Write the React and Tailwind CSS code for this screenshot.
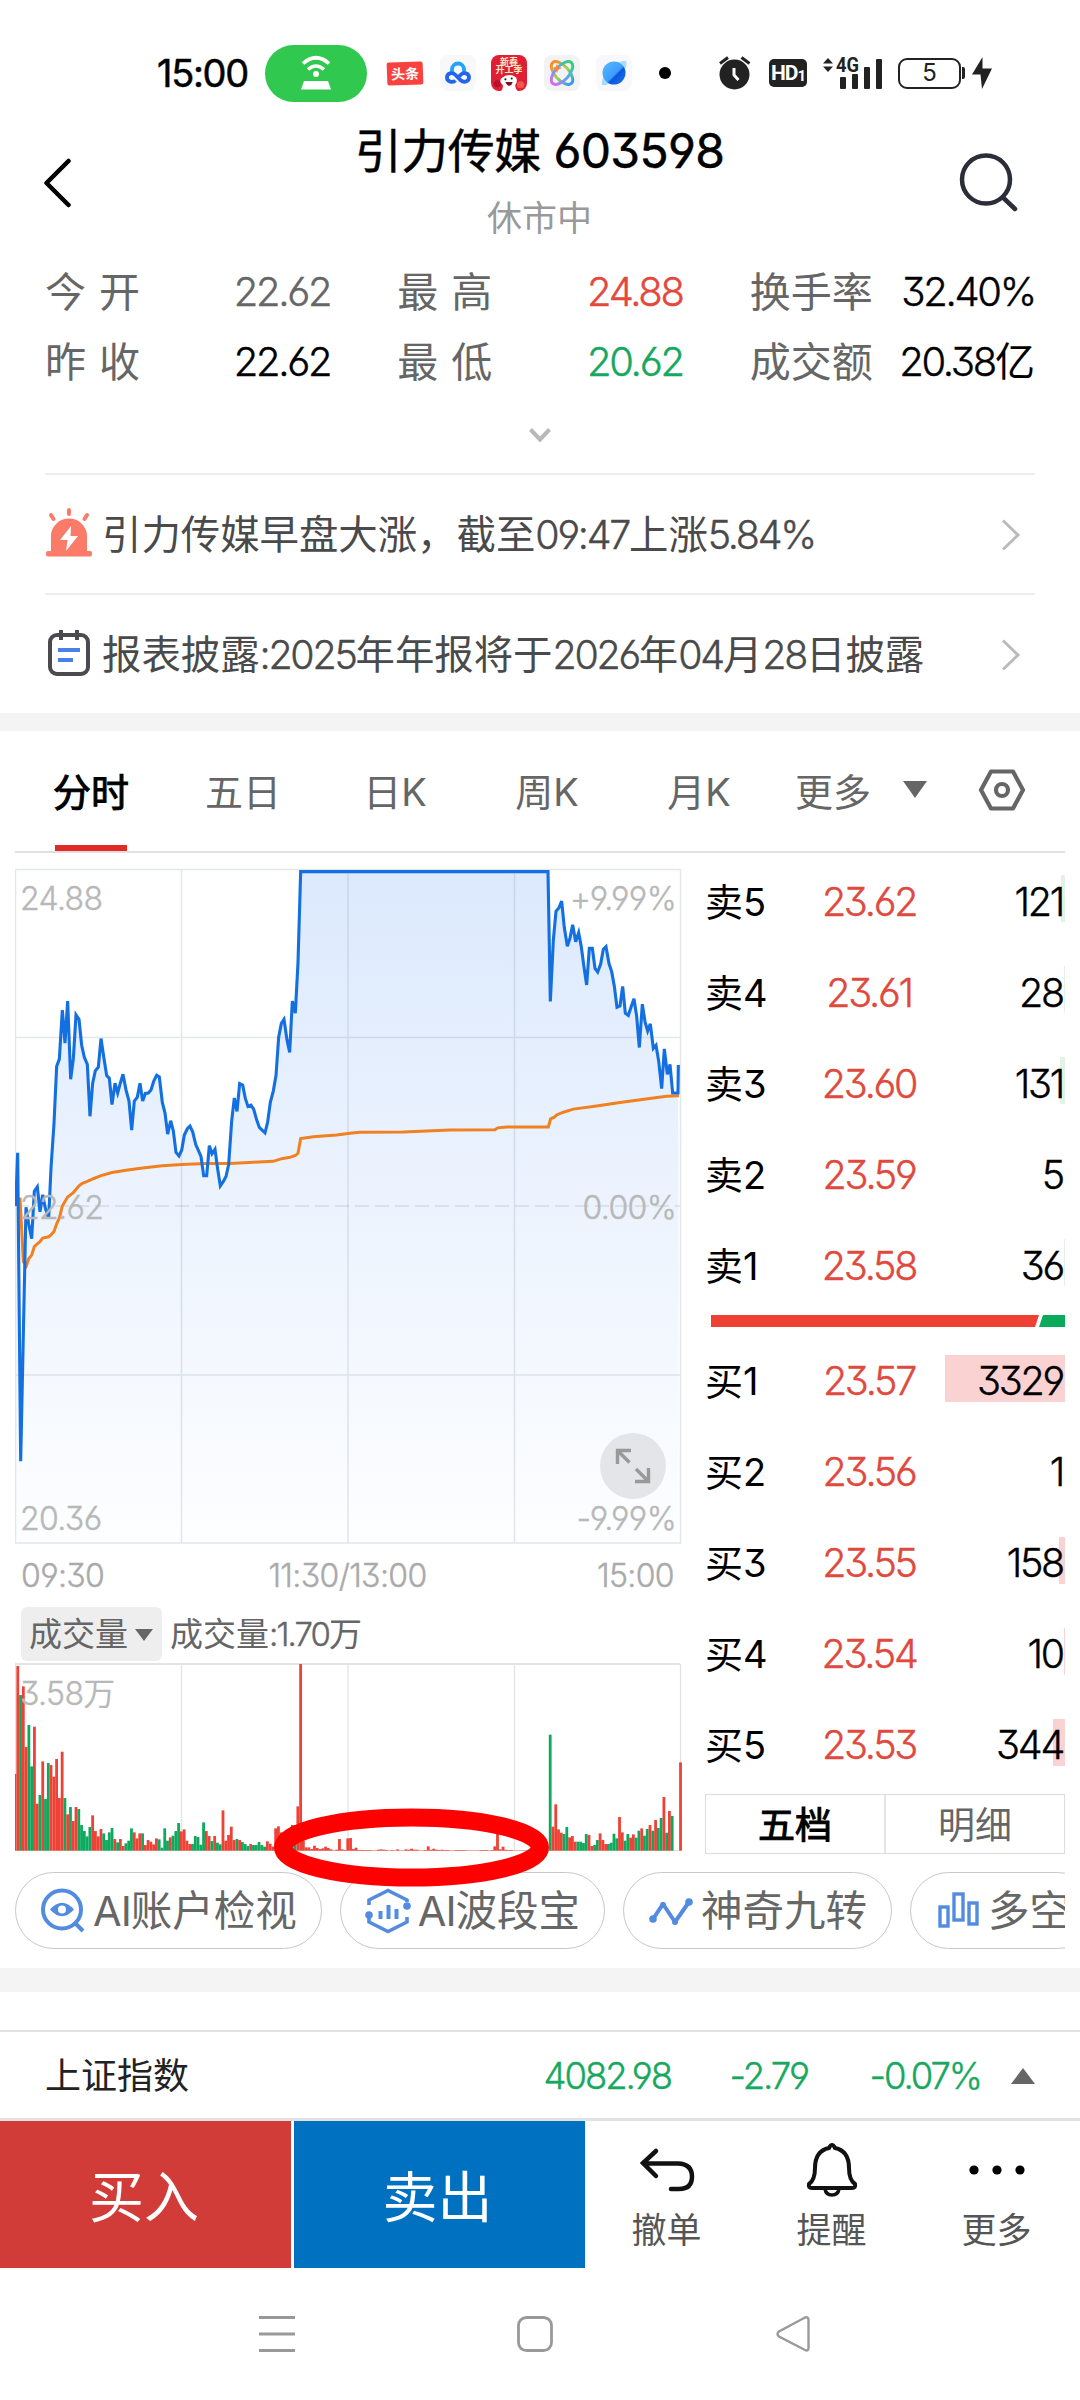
import React from 'react'

const PRICE_LINE =
    '47,775 53,656 62,1347 78,778 86,815 95,848 103,742 112,732 120,788 128,750 136,780 146,803 153,690 162,590 170,462 178,446 187,336 195,410 203,316 212,491 220,445 228,347 237,357 245,415 253,442 262,458 270,574 278,500 286,472 295,464 303,400 311,440 320,483 328,489 336,548 345,500 353,522 361,500 369,480 378,515 387,540 395,605 403,540 412,531 420,500 428,540 436,523 445,522 453,515 461,496 470,482 478,486 487,543 495,567 503,614 512,584 520,607 528,655 537,663 545,650 553,616 562,602 570,596 578,609 587,637 603,664 611,707 620,707 628,640 636,658 645,648 653,692 661,730 670,720 678,709 686,682 695,585 703,533 711,563 719,501 728,504 736,534 744,552 753,549 761,558 770,582 778,599 795,611 803,587 811,543 820,517 828,483 836,397 844,366 852,357 861,403 869,431 877,316 886,343 894,230 902,26 ' +
    '1644,26 1651,317 1660,180 1668,115 1677,107 1685,92 1693,152 1702,193 1710,175 1718,145 1727,183 1736,163 1744,195 1752,240 1760,280 1768,198 1777,198 1785,243 1793,251 1802,233 1810,200 1818,194 1827,232 1835,250 1843,283 1851,330 1860,327 1868,283 1876,343 1885,348 1893,330 1902,311 1910,350 1918,420 1927,323 1935,362 1943,383 1951,367 1960,422 1968,415 1976,450 1985,512 1993,423 2002,480 2010,458 2018,522 2034,522 2035,459'

const AVG_LINE =
    '50,775 60,757 70,900 79,909 86,893 95,885 103,866 112,860 120,855 128,847 146,844 153,840 162,832 170,815 178,802 187,775 203,755 220,745 237,730 247,724 262,720 280,714 303,707 336,700 378,695 428,690 487,685 545,682 620,680 690,680 760,677 820,675 845,669 870,666 886,662 894,657 902,624 940,620 1010,616 1050,612 1080,610 1210,609 1350,605 1485,604 1493,600 1520,598 1645,598 1652,580 1663,576 1670,571 1690,565 1720,558 1790,551 1860,543 1960,533 2000,529 2037,528'

// one entry per minute, r = up, g = down
const MORNING =
    'r230 r554 g467 r493 r311 g377 g253 r372 r141 g167 r268 g155 g263 r257 r222 r275 r158 r297 g158 r109 g131 r89 r131 g125 g77 g59 g43 g71 r106 r59 r43 r65 g52 g32 g55 g68 r35 g25 r35 r14 g22 g30 g67 r55 r37 r52 g52 r17 r32 r27 r19 r37 g34 g9 g67 g30 r40 g45 g59 g83 r58 r64 r30 r20 g20 g44 g41 g18 g85 r59 r44 g29 r44 g24 g19 r121 r30 r47 r72 r32 g35 r32 g26 g20 g14 r20 g17 g17 g26 g17 g12 r28 r21 r12 r67 r73 r55 r40 r50 r60 r77 g77 r133 r560 r30 r10 r10 r5 r15 r8 r5 r7 r12 r8 r4 r1 r3 r35 r4 r2'
const NOON =
    'r37 r38 r5 r9 r2 r2 r2 r2 r2 r1 r1 r3 r4 r3 r2 r1 r2 r1 r4 r1 r1 r4 r3 r6 r3 r3 r1 r1 r2 r13 r3 r6 r3 r2 r3 r2 r2 r1 r1 r2 r2 r2 r2 r1 r1 r1 r1 r1 r2 r2 r2 r1 r2 r13 r52 r4 r12 r3 r2 r2 r1 r1 r1 r1 r1 r1 r1 r1 r1 r1 r1 r1 r1'
const AFTERNOON =
    'g348 r72 r139 r64 r54 g50 g71 r40 r44 r27 g27 g27 g23 g50 r47 r14 g17 g32 r52 r32 r20 g20 g24 g51 g37 r101 r55 g30 g50 r39 r49 g39 g60 r67 g45 g65 r77 g60 r92 g68 g98 r161 g54 r119 g104 r0 r0 r265'
const VOLUMES = [MORNING, NOON, AFTERNOON].join(' ').split(' ')

const SELLS = [
    ['卖5', '23.62', '121', 4],
    ['卖4', '23.61', '28', 1],
    ['卖3', '23.60', '131', 5],
    ['卖2', '23.59', '5', 0],
    ['卖1', '23.58', '36', 1],
]

const BUYS = [
    ['买1', '23.57', '3329', 120],
    ['买2', '23.56', '1', 0],
    ['买3', '23.55', '158', 6],
    ['买4', '23.54', '10', 1],
    ['买5', '23.53', '344', 12],
]

// latin digits run tighter than the chinese glyphs around them
const Num = ({ children }) => <span className="font-light tracking-[-0.057em] [-webkit-text-stroke:0.4px_currentColor]">{children}</span>

const StatusBar = () => (
    <div className="flex h-[105px] shrink-0 items-center pt-[41px] pl-[157px]">
        <span className="w-[108px] text-[38px] tracking-[-1.3px] [-webkit-text-stroke:0.5px_#000]">15:00</span>
        <div className="flex h-[57px] w-[102px] items-center justify-center rounded-full bg-[#31c850]">
            <svg width="32" height="36" viewBox="0 0 32 36" fill="none" stroke="#fff" strokeWidth="3.6">
                <path d="M3 8.500Q16 -3 29 8.500M8 14.500Q16 7.500 24 14.500" />
                <circle cx="16" cy="19" r="3" fill="#fff" stroke="none" />
                <path d="M4 26H28L31 34.500H1Z" fill="#fff" stroke="none" />
            </svg>
        </div>
        <div className="ml-5 flex h-[23px] w-9 -rotate-2 items-center justify-center rounded-[2px] bg-[#f9423f] text-[14px] font-bold text-white">
            头条
        </div>
        <div className="ml-[17px] flex size-9 items-center justify-center rounded-lg bg-[#f8f8fa]">
            <svg width="28" height="24" viewBox="0 0 28 24" fill="none" strokeWidth="3.800">
                <path d="M8 12V8.500A6 6 0 0 1 20 8.500V11" stroke="#21a5f6" />
                <path d="M11.500 19.500C9 22 3 21 3 16.500C3 12 8.500 11 11 13.500L17 19.500C20 22 25 20.500 25 16.500C25 12 19.500 11 17 13.500L14.500 16" stroke="#2264ea" />
            </svg>
        </div>
        <div className="ml-[15px] flex h-9 w-9 flex-col items-center overflow-hidden rounded-lg bg-[#e01f34] pt-[3px] text-[9px] leading-[8px] font-bold text-[#ffe9c4]">
            <span>新春</span>
            <span>开工季</span>
            <svg width="36" height="19" viewBox="0 0 36 19">
                <circle cx="5" cy="11" r="4" fill="#b5102b" />
                <circle cx="31" cy="12" r="4" fill="#f2574d" />
                <path d="M9 19Q12 16 11 12Q7 10 9 5Q18 -2 26 4Q28 9 25 12Q25 17 28 19Z" fill="#fff" />
                <circle cx="14" cy="6" r="1.200" fill="#222" />
                <circle cx="21" cy="5" r="1.200" fill="#222" />
                <path d="M14 9H22Q21 14 17 13Q15 12 14 9Z" fill="#7c1420" />
            </svg>
        </div>
        <div className="ml-[17px] flex size-9 items-center justify-center rounded-lg bg-[#f3f3f5]">
            <svg width="26" height="26" viewBox="0 0 26 26" fill="none" strokeWidth="3">
                <defs>
                    <linearGradient id="rainbowA" x1="0" y1="0" x2="1" y2="0">
                        <stop offset="0" stopColor="#ff8a2a" />
                        <stop offset="0.5" stopColor="#9bd64a" />
                        <stop offset="1" stopColor="#2f9bf2" />
                    </linearGradient>
                    <linearGradient id="rainbowB" x1="1" y1="0" x2="0" y2="0">
                        <stop offset="0" stopColor="#35cf7a" />
                        <stop offset="0.5" stopColor="#56a8f8" />
                        <stop offset="1" stopColor="#d66cf0" />
                    </linearGradient>
                </defs>
                <ellipse cx="13" cy="13" rx="14" ry="7" transform="rotate(48 13 13)" stroke="url(#rainbowA)" />
                <ellipse cx="13" cy="13" rx="14" ry="7" transform="rotate(-48 13 13)" stroke="url(#rainbowB)" />
                <path d="M8 4L9.500 7L13 8L9.500 9.500L8 13L6.500 9.500L3 8L6.500 7Z" fill="#ff8438" />
            </svg>
        </div>
        <div className="ml-4 flex size-9 items-center justify-center rounded-lg bg-[#f8f8fa]">
            <svg width="26" height="26" viewBox="0 0 26 26">
                <defs>
                    <linearGradient id="planet" x1="0" y1="0" x2="1" y2="1">
                        <stop offset="0" stopColor="#57bbff" />
                        <stop offset="0.550" stopColor="#3d9bfb" />
                        <stop offset="0.600" stopColor="#0a55dc" />
                        <stop offset="1" stopColor="#2277f5" />
                    </linearGradient>
                </defs>
                <path d="M1 25Q0 19 5 13L13 21Q6 26 1 25ZM25 1Q27 6 22 12L15 4Q21 0 25 1Z" fill="#a8dcff" />
                <circle cx="13" cy="13" r="11.500" fill="url(#planet)" />
            </svg>
        </div>
        <div className="ml-[27px] size-3 rounded-full bg-black" />
        <svg className="ml-[48px]" width="32" height="34" viewBox="0 0 32 34" fill="#222">
            <circle cx="15.500" cy="18.500" r="15" />
            <path d="M1 7.500L9 1.500M22.500 1.500L30.500 7.500" stroke="#222" strokeWidth="3" />
            <path d="M15 12V19L19.500 24" stroke="#fff" strokeWidth="3" fill="none" />
        </svg>
        <div className="ml-[18px] flex h-7 w-[38px] items-center justify-center rounded-[5px] bg-[#222] font-['Roboto'] text-[21px] font-bold tracking-[-1px] text-white">
            HD<span className="pt-1.5 text-[15px]">1</span>
        </div>
        <svg className="ml-4 overflow-visible" width="60" height="34" viewBox="0 0 60 34" fill="#222">
            <path d="M0 7.500L5 2L10 7.500ZM0 10.500L5 16L10 10.500Z" />
            <text x="13" y="15.500" fontSize="21" fontWeight="700" fontFamily="Roboto" textLength="23" lengthAdjust="spacingAndGlyphs">4G</text>
            <rect x="17" y="21" width="6" height="12" rx="1" />
            <rect x="29" y="18" width="6" height="15" rx="1" />
            <rect x="41" y="11" width="6" height="22" rx="1" />
            <rect x="53" y="3" width="6" height="30" rx="1" />
        </svg>
        <div className="ml-[15px] flex h-[31px] w-[63px] items-center justify-center rounded-[9px] border-2 border-[#222] text-[24px] text-[#222]">5</div>
        <div className="ml-px h-3 w-[3px] rounded-r-[2px] bg-[#222]" />
        <svg className="ml-[7px]" width="20" height="32" viewBox="0 0 20 32" fill="#222">
            <path d="M10.500 0L0 17.500H8.500L10 32L20 11.500H10.500Z" />
        </svg>
    </div>
)

const Header = () => (
    <div className="flex h-[152px] shrink-0 justify-between px-[44px]">
        <svg className="mt-[53px]" width="28" height="50" viewBox="0 0 28 50" fill="none" stroke="#000" strokeWidth="4.500" strokeLinecap="round" strokeLinejoin="round">
            <path d="M24.500 3L2.500 25L24.500 47" />
        </svg>
        <div className="flex flex-col items-center pl-[49px]">
            <h1 className="mt-[21px] text-[47px] leading-[50px] tracking-[-0.5px] [-webkit-text-stroke:0.5px_#000]">
                引力传媒 <span className="text-[48px] tracking-[-0.700px]">603598</span>
            </h1>
            <p className="mt-[17px] text-[35px] leading-[50px] text-[#999]">休市中</p>
        </div>
        <svg className="mt-[47px] mr-[18px]" width="60" height="62" viewBox="0 0 60 62" fill="none" stroke="#2b2d38" strokeWidth="4.500" strokeLinecap="round">
            <circle cx="28" cy="27.500" r="24" />
            <path d="M45.500 46L57 57" />
        </svg>
    </div>
)

const Quote = ({ label, value, color, spaced }) => (
    <div className="flex items-center justify-between">
        <span className={spaced ? 'text-[41px] tracking-[13px] text-[#666]' : 'text-[41px] text-[#666]'}>{label}</span>
        <span className={color}>{value}</span>
    </div>
)

const Quotes = () => (
    <div className="flex h-[216px] shrink-0 flex-col">
        <div className="grid grid-cols-3 gap-x-[67px] px-[45px] text-[40px] leading-[70px]">
            <Quote label="今开" spaced value={<Num>22.62</Num>} color="text-[#666]" />
            <Quote label="最高" spaced value={<Num>24.88</Num>} color="text-[#e4483c]" />
            <Quote label="换手率" value={<Num>32.40%</Num>} color="text-black" />
            <Quote label="昨收" spaced value={<Num>22.62</Num>} color="text-black" />
            <Quote label="最低" spaced value={<Num>20.62</Num>} color="text-[#17a85f]" />
            <Quote label="成交额" value={<><Num>20.38</Num>亿</>} color="text-black" />
        </div>
        <svg className="mx-auto mt-[31px]" width="22" height="15" viewBox="0 0 22 15" fill="none" stroke="#b8b8b8" strokeWidth="4">
            <path d="M1.500 1.500L11 11.500L20.500 1.500" />
        </svg>
    </div>
)

const NewsRow = ({ icon, children }) => (
    <div className="mx-[45px] flex h-[120px] shrink-0 items-center border-t-2 border-[#eee] pt-0.5 text-[39.4px] text-[#4a4a4a]">
        {icon}
        <span className="ml-[9px] flex-1 pt-0.5">{children}</span>
        <svg className="mr-[14px]" width="20" height="32" viewBox="0 0 20 32" fill="none" stroke="#bbb" strokeWidth="3">
            <path d="M2 1.500L17 16L2 30.500" />
        </svg>
    </div>
)

const AlarmIcon = () => (
    <svg className="-mt-1" width="48" height="50" viewBox="0 0 48 50">
        <path d="M24 2V6M6 7L8.500 11M42 7L39.500 11" stroke="#fc7a68" strokeWidth="4" strokeLinecap="round" />
        <path d="M6 43V28A18 17.500 0 0 1 42 28V43Z" fill="#fc7a68" />
        <rect x="1" y="43" width="46" height="5.500" rx="2" fill="#fc7a68" />
        <path d="M26 18L15 32H22.500L21 43L33 28H25.500Z" fill="#fff" />
    </svg>
)

const ReportIcon = () => (
    <svg className="-mt-1" width="48" height="50" viewBox="0 0 48 50" fill="none">
        <rect x="5" y="7" width="38" height="39" rx="7" stroke="#4a4a4f" strokeWidth="4" />
        <path d="M16 2V12M32 2V12" stroke="#4a4a4f" strokeWidth="4" />
        <path d="M13 22H35M13 32H28" stroke="#4a80e8" strokeWidth="4" />
    </svg>
)

const Tabs = () => (
    <div className="mx-[15px] flex h-[122px] shrink-0 items-stretch border-b-2 border-[#e0e0e0] text-[38px] text-[#666]">
        <div className="flex w-[152px] flex-col items-center text-black">
            <span className="mt-[35px] leading-[52px] [-webkit-text-stroke:1px_#000]">分时</span>
            <span className="mt-auto h-1.5 w-[72px] bg-[#df2b24]" />
        </div>
        {['五日', '日K', '周K', '月K'].map((t) => (
            <span key={t} className="mt-[35px] w-[152px] text-center leading-[52px]">{t}</span>
        ))}
        <span className="mt-[35px] ml-5 leading-[52px]">更多</span>
        <svg className="mt-[50px] ml-[32px]" width="24" height="17" viewBox="0 0 24 17" fill="#666">
            <path d="M0 0H24L12 17Z" />
        </svg>
        <svg className="mt-[38px] ml-[51px]" width="48" height="42" viewBox="0 0 48 42" fill="none" stroke="#666" strokeWidth="4.200" strokeLinejoin="round">
            <path d="M13 2.500H35L45 21L35 39.500H13L3 21Z" />
            <circle cx="24" cy="21" r="6" />
        </svg>
    </div>
)

const AxisLabel = ({ children }) => <span className="font-light tracking-[-0.02em] [-webkit-text-stroke:0.4px_currentColor]">{children}</span>

const PriceChart = () => (
    <div className="relative h-[676px] w-[667px] text-[32px] leading-8 text-[#b8b8b8]">
        <svg className="block" width="667" height="676" viewBox="0 0 667 676" fill="none">
            <defs>
                <linearGradient id="area" gradientUnits="userSpaceOnUse" x1="0" y1="26" x2="0" y2="1530">
                    <stop offset="0" stopColor="#dce9fd" />
                    <stop offset="1" stopColor="#fdfeff" />
                </linearGradient>
            </defs>
            <g transform="translate(-15 -8) scale(0.33333 0.44643)">
                <polygon points={`47,1530 ${PRICE_LINE} 2036,1530`} fill="url(#area)" />
            </g>
            <path d="M0.500 1.500H665.500V675H0.500ZM166.500 1V675M333 1V675M499.500 1V675M0 169.500H665M0 507H665" stroke="#8090a0" strokeOpacity="0.220" strokeWidth="1.500" />
            <path d="M0 338H665" stroke="#8090a0" strokeOpacity="0.250" strokeWidth="1.500" strokeDasharray="14 6" />
        </svg>
        <span className="absolute top-[15px] left-[5px]"><AxisLabel>24.88</AxisLabel></span>
        <span className="absolute top-[15px] right-[6px]"><AxisLabel>+9.99%</AxisLabel></span>
        <span className="absolute top-[324px] right-[6px]"><AxisLabel>0.00%</AxisLabel></span>
        <span className="absolute bottom-[9px] left-[5px]"><AxisLabel>20.36</AxisLabel></span>
        <span className="absolute right-[6px] bottom-[9px]"><AxisLabel>-9.99%</AxisLabel></span>
        <svg className="absolute top-0 left-0" width="667" height="676" viewBox="0 0 667 676" fill="none">
            <g transform="translate(-15 -8) scale(0.33333 0.44643)">
                <polyline points={AVG_LINE} stroke="#f08020" strokeWidth="3" vectorEffect="non-scaling-stroke" />
                <polyline points={PRICE_LINE} stroke="#1470e0" strokeWidth="3.100" vectorEffect="non-scaling-stroke" />
            </g>
        </svg>
        <span className="absolute top-[324px] left-[5px]"><AxisLabel>22.62</AxisLabel></span>
        <div className="absolute right-4 bottom-[45px] flex size-[66px] items-center justify-center rounded-full bg-[#e4e5e8]">
            <svg width="36" height="36" viewBox="0 0 36 36" fill="none" stroke="#999" strokeWidth="3.400">
                <path d="M2.500 16V2.500H16M2.500 2.500L14.500 14.500M33.500 20V33.500H20M33.500 33.500L21 21" />
            </svg>
        </div>
    </div>
)

const VolumeChart = () => (
    <div className="relative h-[190px] w-[667px]">
        <svg className="block" width="667" height="190" viewBox="0 0 667 190">
            <path d="M0 2H665" stroke="#e4e4e4" strokeWidth="2" />
            <path d="M0.500 2V188M166.500 2V188M333 2V188M499.500 2V188M665.500 2V188M0 188.500H665" stroke="#e2e2e2" strokeWidth="1.200" />
        </svg>
        <svg className="absolute top-0 left-0" width="667" height="190" viewBox="0 0 667 190">
            {VOLUMES.map((v, i) => {
                const h = Number(v.slice(1)) / 3
                return (
                    <rect key={i} x={i * 2.773 - 1.4} y={188.700 - h} width="2.800" height={h} fill={v[0] === 'r' ? '#ee4236' : '#0ea95e'} />
                )
            })}
        </svg>
        <span className="absolute top-[16px] left-[5px] text-[32px] leading-8 text-[#b8b8b8]"><AxisLabel>3.58</AxisLabel>万</span>
        {/* hand drawn marker over the lunch session */}
        <svg className="absolute top-[140px] left-[255px] z-10" width="284" height="90" viewBox="0 0 284 90" fill="none">
            <ellipse cx="141.500" cy="45.500" rx="128.500" ry="30" stroke="#fe0000" strokeWidth="18" />
        </svg>
    </div>
)

const BookRow = ({ row, sell }) => (
    <div className="relative mb-11 h-[47px] text-[39.5px] leading-[52px]">
        <div className={sell ? 'absolute top-0 right-0 h-full bg-[#e2f3e6]' : 'absolute top-0 right-0 h-full bg-[#f9d2d1]'} style={{ width: row[3] }} />
        <div className={sell ? 'relative flex pt-px' : 'relative flex'}>
            <span className="w-[86px] text-[38px]">{row[0]}</span>
            <span className="w-[156px] text-center text-[#e0493d]"><Num>{row[1]}</Num></span>
            <span className="flex-1 pr-0.5 text-right"><Num>{row[2]}</Num></span>
        </div>
    </div>
)

const OrderBook = () => (
    <div className="ml-[23px] flex w-[360px] flex-col pt-[7px]">
        {SELLS.map((r) => <BookRow key={r[0]} row={r} sell />)}
        <div className="-mt-[15px] mb-7 ml-1.5 flex h-3 shrink-0">
            <svg width="354" height="12" viewBox="0 0 354 12">
                <path d="M0 0H328L324 12H0Z" fill="#ee4033" />
                <path d="M332 0H354V12H328Z" fill="#09ab5b" />
            </svg>
        </div>
        {BUYS.map((r) => <BookRow key={r[0]} row={r} />)}
        <div className="-mt-4 flex h-[60px] shrink-0 border border-[#ddd] text-[37px]">
            <span className="flex flex-1 items-center justify-center border-r-2 border-[#e4e4e4] pt-0.5 [-webkit-text-stroke:1px_#000]">五档</span>
            <span className="flex flex-1 items-center justify-center pt-0.5 text-[#666]">明细</span>
        </div>
    </div>
)

const Chip = ({ icon, children }) => (
    <div className="flex h-[77px] shrink-0 items-center gap-[7px] rounded-full border border-[#c8c8c8] px-6 text-[41.5px] whitespace-nowrap text-[#666]">
        <svg width="46" height="46" viewBox="0 0 46 46" fill="none" stroke="#528be0" strokeWidth="4">{icon}</svg>
        <span className="pt-0.5">{children}</span>
    </div>
)

const Chips = () => (
    <div className="mx-[15px] mt-[18px] flex shrink-0 gap-[18px] overflow-hidden">
        <Chip
            icon={
                <>
                    <circle cx="22" cy="21.500" r="19" />
                    <path d="M35 35L43 43" />
                    <path d="M10 21.500Q22 8 34 21.500Q22 35 10 21.500Z" fill="#528be0" stroke="none" />
                    <circle cx="22" cy="21.500" r="4" fill="#fff" stroke="none" />
                </>
            }
        >
            <span className="tracking-[-1px]">AI</span>账户检视
        </Chip>
        <Chip
            icon={
                <>
                    <path d="M4 17V12L23 2.500L42 12V14M4 30V34L23 43.500L42 34V29" strokeWidth="3.600" />
                    <circle cx="42" cy="18" r="3.800" fill="#528be0" stroke="none" />
                    <circle cx="4" cy="27" r="3.800" fill="#528be0" stroke="none" />
                    <path d="M15.500 23V31M23.500 17V31M31.500 21V31" />
                </>
            }
        >
            <span className="tracking-[-1px]">AI</span>波段宝
        </Chip>
        <Chip
            icon={
                <>
                    <path d="M5 31L15 16L27 34L41 14" strokeLinejoin="round" />
                    <circle cx="5" cy="31" r="3.800" fill="#528be0" stroke="none" />
                    <circle cx="41" cy="14" r="3.800" fill="#528be0" stroke="none" />
                    <circle cx="15" cy="17" r="3" fill="#528be0" stroke="none" />
                    <circle cx="27" cy="34" r="3" fill="#528be0" stroke="none" />
                </>
            }
        >
            神奇九转
        </Chip>
        <Chip
            icon={
                <g strokeWidth="3.400">
                    <rect x="5" y="19" width="8" height="19" />
                    <rect x="19" y="6" width="9" height="26" />
                    <rect x="34" y="15" width="8" height="21" />
                </g>
            }
        >
            多空
        </Chip>
    </div>
)

const IndexBar = () => (
    <div className="mt-[38px] flex h-[91px] shrink-0 items-center border-t-2 border-b-[3px] border-[#e2e2e2] px-[45px] pt-0.5 text-[36.5px] text-[#17a85f]">
        <span className="flex-1 text-[36px] text-[#222]">上证指数</span>
        <Num>4082.98</Num>
        <span className="w-[137px] text-right"><Num>-2.79</Num></span>
        <span className="w-[173px] text-right"><Num>-0.07%</Num></span>
        <svg className="ml-[30px]" width="24" height="16" viewBox="0 0 24 16" fill="#666">
            <path d="M0 16H24L12 0Z" />
        </svg>
    </div>
)

const Action = ({ label, children }) => (
    <div className="flex w-[165px] flex-col items-center pt-[20px] text-[35px] text-[#555]">
        <svg width="58" height="58" viewBox="0 0 58 58" fill="none" stroke="#111" strokeWidth="4.500" strokeLinecap="round">{children}</svg>
        <span className="mt-[5px] leading-[52px]">{label}</span>
    </div>
)

const BottomBar = () => (
    <div className="flex h-[147px] shrink-0">
        <button className="mr-[3px] w-[291px] bg-[#d23c38] pt-1.5 pr-[3px] text-[55px] text-white">买入</button>
        <button className="mr-[-1px] w-[291px] bg-[#0070c0] pt-1.5 pr-1 text-[55px] text-white">卖出</button>
        <Action label="撤单">
            <path d="M18 10L5 22L18 35M6 22.500H40Q54 23 54 35.500Q54 48 41 48H33" />
        </Action>
        <Action label="提醒">
            <path d="M26 7Q29 1 32 7Q46 10 46 27Q46 39 52 43Q53 47 49 47H9Q5 47 6 43Q12 39 12 27Q12 10 26 7Z" strokeWidth="4" />
            <path d="M22 48Q23 54 29 54Q35 54 36 48" strokeWidth="3.600" />
        </Action>
        <Action label="更多">
            <g fill="#000" stroke="none">
                <circle cx="6" cy="29" r="4.600" />
                <circle cx="29" cy="29" r="4.600" />
                <circle cx="52" cy="29" r="4.600" />
            </g>
        </Action>
    </div>
)

const NavBar = () => (
    <div className="flex flex-1 items-start pt-[46px] pl-[257px]">
        <svg width="554" height="40" viewBox="0 0 554 40" fill="none" stroke="#999" strokeWidth="2.800">
            <path d="M2 3.500H38M2 20H38M2 36.500H38" />
            <rect x="261.500" y="3.500" width="33" height="33" rx="8" />
            <path d="M548 3.500Q551.500 2.500 551.500 6V34Q551.500 37.500 548 36L522 22.500Q519 20 522 17.500Z" strokeWidth="2.400" />
        </svg>
    </div>
)

const App = () => {
    return (
        <div className="flex h-[2400px] w-[1080px] flex-col overflow-hidden bg-white font-['Inter','Noto_Sans_CJK_SC',sans-serif] leading-none text-black [font-feature-settings:'cv03','cv04','cv09']">
            <StatusBar />
            <Header />
            <Quotes />
            <NewsRow icon={<AlarmIcon />}>
                引力传媒早盘大涨，截至<Num>09:47</Num>上涨<Num>5.84%</Num>
            </NewsRow>
            <NewsRow icon={<ReportIcon />}>
                报表披露<Num>:2025</Num>年年报将于<Num>2026</Num>年<Num>04</Num>月<Num>28</Num>日披露
            </NewsRow>
            <div className="h-[18px] shrink-0 bg-[#f4f4f4]" />
            <Tabs />
            <div className="flex h-[1001px] shrink-0 pt-[15px] pl-[15px]">
                <div className="flex flex-col">
                    <PriceChart />
                    <div className="grid h-[62px] w-[665px] grid-cols-3 items-center px-1.5 pt-0.5 text-[32px] text-[#aaa]">
                        <AxisLabel>09:30</AxisLabel>
                        <span className="text-center"><AxisLabel>11:30/13:00</AxisLabel></span>
                        <span className="text-right"><AxisLabel>15:00</AxisLabel></span>
                    </div>
                    <div className="flex h-[56px] items-center pl-1.5 text-[33px] text-[#666]">
                        <span className="flex h-[54px] w-[141px] items-center justify-between rounded-md bg-[#eee] pt-px pr-[9px] pl-2">
                            成交量
                            <svg width="18" height="12" viewBox="0 0 18 12" fill="#666">
                                <path d="M0 0H18L9 12Z" />
                            </svg>
                        </span>
                        <span className="ml-2 pt-px">成交量<Num>:1.70</Num>万</span>
                    </div>
                    <VolumeChart />
                </div>
                <OrderBook />
            </div>
            <Chips />
            <div className="mt-[19px] h-6 shrink-0 bg-[#f4f4f4]" />
            <IndexBar />
            <BottomBar />
            <NavBar />
        </div>
    )
}

export default App
